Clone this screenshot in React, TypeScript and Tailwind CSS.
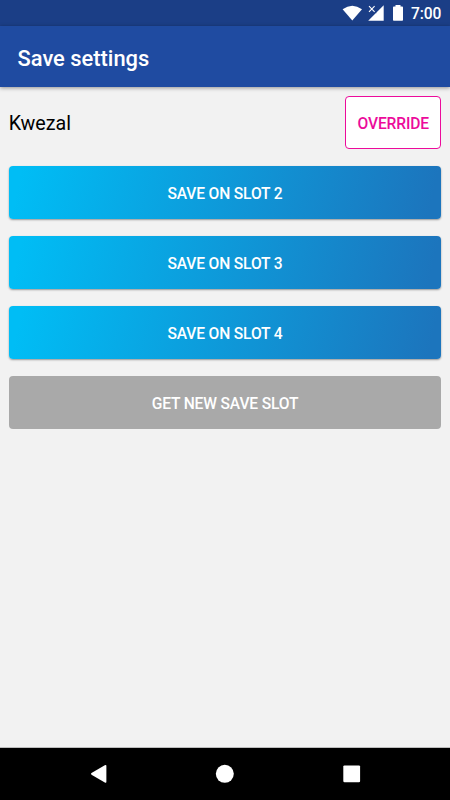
function StatusBar() {
  return (
    <div className="flex h-[26px] shrink-0 items-center bg-[#1b3e86] pr-[8px] justify-end">
      <svg width="70" height="26" viewBox="340 0 70 26" fill="#fff" aria-hidden="true">
        <path d="M342.6 9.2Q352.3 2.2 362 9.2L352.3 20.6Z" />
        <path d="M383.7 5.2V20.7H368.2Z" />
        <path d="M367.6 5L376.2 13.6V5Z" fill="#1b3e86" />
        <path d="M369 6.2L374.6 11.8M374.6 6.2L369 11.8" stroke="#fff" strokeWidth="1.1" />
        <path d="M395.5 5H400.5V6.6H402.2Q403 6.6 403 7.4V20Q403 20.8 402.2 20.8H393.8Q393 20.8 393 20V7.4Q393 6.6 393.8 6.6H395.5Z" />
      </svg>
      <span className="ml-[1px] w-[31px] whitespace-nowrap pt-[2px] text-[15.6px] font-medium leading-[26px] tracking-[-0.15px] text-white">7:00</span>
    </div>
  );
}

function SlotButton({ label }: { label: string }) {
  return (
    <button className="h-[52.5px] w-full shrink-0 rounded-[4px] bg-[linear-gradient(103deg,#00bdf5_3%,#1c75bd_97%)] pt-[4.5px] text-[15.6px] font-medium tracking-[-0.15px] text-white shadow-[0_1px_2px_rgba(0,0,0,0.38)]">
      {label}
    </button>
  );
}

export default function App() {
  return (
    <div className="flex h-[800px] w-[450px] flex-col overflow-hidden bg-[#f2f2f2] font-[Roboto,'Liberation_Sans',sans-serif]">
      <StatusBar />
      <header className="z-10 flex h-[61px] shrink-0 items-center bg-[#1f4ba1] pl-[17.5px] pt-[5px] shadow-[0_1px_4px_rgba(0,0,0,0.4)]">
        <h1 className="text-[21.9px] font-medium text-white">Save settings</h1>
      </header>
      <main className="flex flex-1 flex-col gap-[17.5px] px-[8.75px] pt-[9px]">
        <div className="flex h-[52.5px] shrink-0 items-center justify-between">
          <span className="pt-[3px] text-[19.7px] text-black">Kwezal</span>
          <button className="h-[52.5px] w-[96px] rounded-[4px] border border-[#ec0b9b] bg-white pt-[4.5px] text-[15.6px] font-medium tracking-[-0.15px] text-[#ec0b9b]">
            OVERRIDE
          </button>
        </div>
        <SlotButton label="SAVE ON SLOT 2" />
        <SlotButton label="SAVE ON SLOT 3" />
        <SlotButton label="SAVE ON SLOT 4" />
        <button className="h-[52.5px] w-full shrink-0 rounded-[4px] bg-[#a9a9a9] pt-[4.5px] text-[15.6px] font-medium tracking-[-0.15px] text-white">
          GET NEW SAVE SLOT
        </button>
      </main>
      <nav className="h-[53px] shrink-0 border-t border-[#bcbcbc] bg-black">
        <svg width="450" height="52" viewBox="0 748 450 52" fill="#fff" aria-hidden="true">
          <path d="M91.5 773.1L104.8 765.2Q106.4 764.4 106.4 766V781.8Q106.4 783.4 104.8 782.5L91.5 774.7Q90.4 773.9 91.5 773.1Z" />
          <circle cx="224.8" cy="773.8" r="9" />
          <rect x="343.3" y="765.4" width="16.8" height="16.9" rx="1.2" />
        </svg>
      </nav>
    </div>
  );
}
